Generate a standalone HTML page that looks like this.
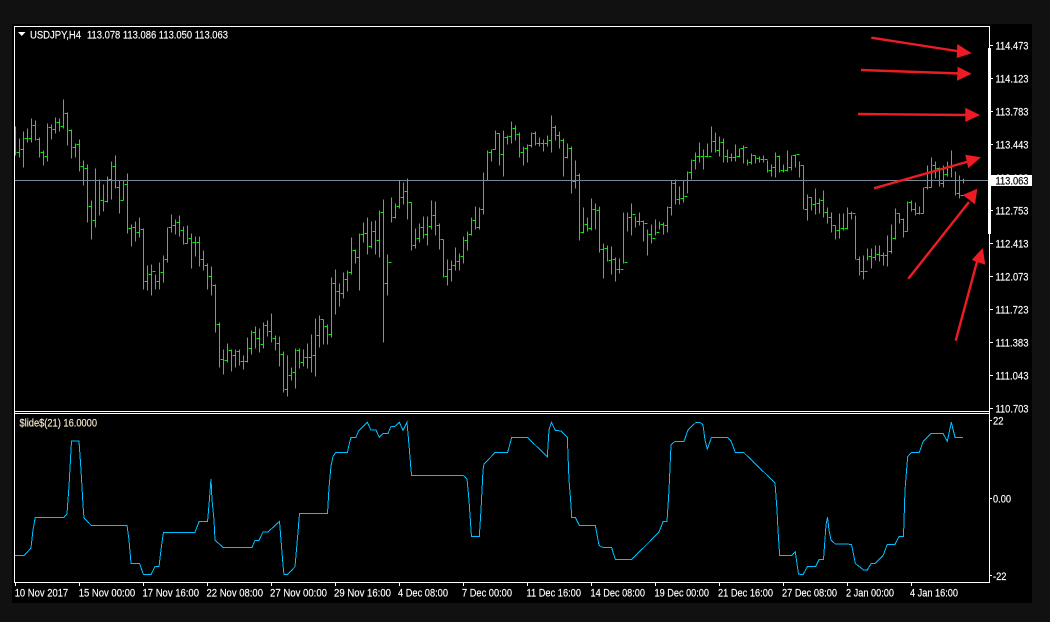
<!DOCTYPE html>
<html><head><meta charset="utf-8"><title>USDJPY,H4</title>
<style>html,body{margin:0;padding:0;background:#111;width:1050px;height:622px;overflow:hidden}svg{display:block}text{font-family:"Liberation Sans",sans-serif;font-size:11px;fill:#fff;stroke:#fff;stroke-width:.15px}</style></head><body>
<svg width="1050" height="622" viewBox="0 0 1050 622" xmlns="http://www.w3.org/2000/svg">
<rect width="1050" height="622" fill="#111"/>
<rect x="12" y="24" width="1020" height="579" fill="#000"/>
<path transform="translate(.5 .5)" shape-rendering="crispEdges" fill="none" stroke="#0ee60e" d="M15 126V155M16 152h2M19 138V157M17 152h2M20 149h2M23 131V167M21 149h2M24 138h2M27 128V142M25 138h2M28 138h2M31 118V142M29 138h2M32 125h2M35 120V140M33 125h2M36 139h2M39 137V157M37 139h2M40 152h2M43 150V165M41 152h2M44 156h2M47 123V161M45 156h2M48 127h2M51 124V139M49 127h2M52 129h2M55 117V133M53 129h2M56 122h2M59 118V131M57 122h2M60 126h2M63 99V128M61 126h2M64 113h2M67 112V145M65 113h2M68 130h2M71 129V158M69 130h2M72 147h2M75 143V157M73 147h2M76 144h2M79 139V171M77 144h2M80 166h2M83 160V185M81 166h2M84 168h2M87 164V222M85 168h2M88 206h2M91 200V239M89 206h2M92 220h2M95 168V227M93 220h2M96 180h2M99 179V215M97 180h2M100 200h2M103 184V211M101 200h2M104 201h2M107 176V202M105 201h2M108 179h2M111 161V199M109 179h2M112 166h2M115 155V188M113 166h2M116 187h2M119 180V213M117 187h2M120 200h2M123 180V200M121 200h2M124 184h2M127 173V233M125 184h2M128 228h2M131 224V246M129 228h2M132 227h2M135 221V241M133 227h2M136 232h2M139 217V237M137 232h2M140 229h2M143 228V289M141 229h2M144 281h2M147 265V290M145 281h2M148 274h2M151 264V295M149 274h2M152 271h2M155 274V289M153 271h2M156 281h2M159 262V289M157 281h2M160 272h2M163 255V282M161 272h2M164 259h2M167 227V262M165 259h2M168 227h2M171 214V232M169 227h2M172 225h2M175 219V234M173 225h2M176 222h2M179 215V236M177 222h2M180 230h2M183 226V244M181 230h2M184 243h2M187 225V243M185 243h2M188 238h2M191 233V268M189 238h2M192 242h2M195 236V256M193 242h2M196 242h2M199 236V266M197 242h2M200 259h2M203 250V270M201 259h2M204 265h2M207 263V289M205 265h2M208 276h2M211 266V295M209 276h2M212 285h2M215 284V332M213 285h2M216 324h2M219 322V367M217 324h2M220 359h2M223 349V374M221 359h2M224 360h2M227 343V362M225 360h2M228 350h2M231 349V371M229 350h2M232 355h2M235 349V367M233 355h2M236 351h2M239 349V365M237 351h2M240 361h2M243 355V369M241 361h2M244 361h2M247 337V362M245 361h2M248 348h2M251 330V354M249 348h2M252 332h2M255 326V348M253 332h2M256 338h2M259 328V352M257 338h2M260 344h2M263 322V348M261 344h2M264 325h2M267 320V336M265 325h2M268 331h2M271 313V342M269 331h2M272 338h2M275 335V350M273 338h2M276 343h2M279 336V366M277 343h2M280 354h2M283 351V392M281 354h2M284 389h2M287 355V396M285 389h2M288 375h2M291 367V380M289 375h2M292 372h2M295 348V388M293 372h2M296 350h2M299 348V368M297 350h2M300 362h2M303 349V366M301 362h2M304 357h2M307 343V368M305 357h2M308 357h2M311 334V372M309 357h2M312 355h2M315 318V376M313 355h2M316 335h2M319 315V347M317 335h2M320 319h2M323 319V344M321 319h2M324 326h2M327 324V344M325 326h2M328 334h2M331 277V337M329 334h2M332 283h2M335 269V314M333 283h2M336 291h2M339 283V306M337 291h2M340 293h2M343 272V298M341 293h2M344 279h2M347 270V291M345 279h2M348 272h2M351 237V274M349 272h2M352 250h2M355 249V263M353 250h2M356 257h2M359 233V290M357 257h2M360 234h2M363 222V242M361 234h2M364 233h2M367 217V254M365 233h2M368 246h2M371 221V248M369 246h2M372 231h2M375 220V254M373 231h2M376 240h2M379 210V257M377 240h2M380 212h2M383 199V342M381 212h2M384 283h2M387 254V295M385 283h2M388 262h2M391 197V222M389 262h2M392 217h2M395 203V218M393 217h2M396 206h2M399 180V208M397 206h2M400 197h2M403 182V204M401 197h2M404 191h2M407 178V219M405 191h2M408 202h2M411 202V250M409 202h2M412 245h2M415 228V248M413 245h2M416 238h2M419 223V242M417 238h2M420 227h2M423 216V238M421 227h2M424 234h2M427 216V245M425 234h2M428 226h2M431 200V229M429 226h2M432 215h2M435 201V235M433 215h2M436 225h2M439 223V249M437 225h2M440 239h2M443 239V277M441 239h2M444 276h2M447 259V285M445 276h2M448 269h2M451 260V281M449 269h2M452 265h2M455 247V270M453 265h2M456 261h2M459 253V270M457 261h2M460 256h2M463 236V263M461 256h2M464 240h2M467 231V250M465 240h2M468 234h2M471 217V235M469 234h2M472 220h2M475 206V229M473 220h2M476 227h2M479 207V229M477 227h2M480 209h2M483 172V214M481 209h2M484 180h2M487 150V180M485 180h2M488 152h2M491 149V161M489 152h2M492 149h2M495 130V149M493 149h2M496 133h2M499 133V165M497 133h2M500 154h2M503 130V176M501 154h2M504 137h2M507 135V144M505 137h2M508 136h2M511 121V143M509 136h2M512 128h2M515 125V140M513 128h2M516 134h2M519 132V157M517 134h2M520 152h2M523 146V165M521 152h2M524 148h2M527 144V162M525 148h2M528 145h2M531 132V147M529 145h2M532 133h2M535 131V145M533 133h2M536 143h2M539 137V146M537 143h2M540 143h2M543 139V151M541 143h2M544 143h2M547 135V146M545 143h2M548 140h2M551 115V152M549 140h2M552 127h2M555 125V140M553 127h2M556 135h2M559 131V148M557 135h2M560 140h2M563 138V176M561 140h2M564 157h2M567 143V158M565 157h2M568 148h2M571 146V193M569 148h2M572 181h2M575 160V188M573 181h2M576 175h2M579 173V240M577 175h2M580 232h2M583 207V233M581 232h2M584 224h2M587 217V231M585 224h2M588 228h2M591 198V230M589 228h2M592 209h2M595 203V229M593 209h2M596 210h2M599 206V252M597 210h2M600 249h2M603 243V278M601 249h2M604 248h2M607 245V261M605 248h2M608 260h2M611 246V274M609 260h2M612 259h2M615 257V281M613 259h2M616 269h2M619 258V273M617 269h2M620 269h2M623 212V263M621 269h2M624 262h2M627 212V231M625 262h2M628 217h2M631 203V235M629 217h2M632 214h2M635 216V227M633 214h2M636 221h2M639 212V225M637 221h2M640 221h2M643 220V241M641 221h2M644 223h2M647 229V255M645 223h2M648 234h2M651 224V243M649 234h2M652 238h2M655 219V235M653 238h2M656 232h2M659 221V229M657 232h2M660 224h2M663 222V234M661 224h2M664 225h2M667 206V232M665 225h2M668 207h2M671 180V215M669 207h2M672 183h2M675 179V204M673 183h2M676 199h2M679 186V204M677 199h2M680 198h2M683 180V202M681 198h2M684 196h2M687 171V193M685 196h2M688 172h2M691 159V179M689 172h2M692 160h2M695 152V169M693 160h2M696 156h2M699 142V162M697 156h2M700 156h2M703 149V169M701 156h2M704 156h2M707 143V157M705 156h2M708 156h2M711 126V152M709 156h2M712 141h2M715 132V152M713 141h2M716 150h2M719 136V156M717 150h2M720 142h2M723 138V162M721 142h2M724 156h2M727 149V162M725 156h2M728 157h2M731 153V161M729 157h2M732 157h2M735 144V161M733 157h2M736 156h2M739 148V157M737 156h2M740 148h2M743 145V163M741 148h2M744 147h2M747 159V165M745 147h2M748 162h2M751 153V164M749 162h2M752 155h2M755 155V163M753 155h2M756 158h2M759 156V162M757 158h2M760 159h2M763 155V162M761 159h2M764 159h2M767 160V172M765 159h2M768 170h2M771 164V176M769 170h2M772 167h2M775 152V177M773 167h2M776 156h2M779 155V172M777 156h2M780 170h2M783 164V172M781 170h2M784 170h2M787 150V171M785 170h2M788 167h2M791 155V170M789 167h2M792 155h2M795 154V167M793 155h2M796 154h2M799 161V177M797 154h2M800 165h2M803 165V209M801 165h2M804 209h2M807 194V220M805 209h2M808 197h2M811 197V210M809 197h2M812 204h2M815 188V214M813 204h2M816 203h2M819 198V213M817 203h2M820 200h2M823 190V217M821 200h2M824 212h2M827 207V223M825 212h2M828 217h2M831 212V232M829 217h2M832 225h2M835 225V239M833 225h2M836 230h2M839 213V238M837 230h2M840 228h2M843 213V230M841 228h2M844 228h2M847 207V229M845 228h2M848 213h2M851 211V219M849 213h2M852 213h2M855 215V259M853 213h2M856 259h2M859 256V275M857 259h2M860 271h2M863 255V279M861 271h2M864 271h2M867 248V260M865 271h2M868 256h2M871 248V268M869 256h2M872 257h2M875 245V260M873 257h2M876 254h2M879 245V261M877 254h2M880 255h2M883 252V265M881 255h2M884 255h2M887 235V266M885 255h2M888 251h2M891 224V253M889 251h2M892 238h2M895 208V239M893 238h2M896 213h2M899 213V223M897 213h2M900 219h2M903 218V237M901 219h2M904 231h2M907 201V231M905 231h2M908 202h2M911 200V211M909 202h2M912 209h2M915 202V215M913 209h2M916 213h2M919 206V214M917 213h2M920 213h2M923 187V213M921 213h2M924 187h2M927 165V189M925 187h2M928 187h2M931 157V187M929 187h2M932 165h2M935 161V178M933 165h2M936 168h2M939 167V186M937 168h2M940 183h2M943 165V187M941 183h2M944 174h2M947 161V176M945 174h2M948 167h2M951 150V177M949 167h2M952 165h2M955 171V195M953 165h2M956 193h2M959 175V198M957 193h2M960 195h2M963 178V183M961 195h2M964 180h2"/>
<rect x="15" y="180" width="976" height="1" fill="#778899"/>
<g fill="#fff" shape-rendering="crispEdges">
<rect x="14" y="26" width="975" height="1"/><rect x="14" y="26" width="1" height="557"/><rect x="989" y="26" width="1" height="557"/>
<rect x="14" y="411" width="975" height="1"/><rect x="14" y="413" width="975" height="1"/><rect x="14" y="582" width="976" height="1"/>
<rect x="988" y="48" width="3" height="186"/>
<path d="M990 45h3v1h-3zM990 78h3v1h-3zM990 111h3v1h-3zM990 144h3v1h-3zM990 210h3v1h-3zM990 243h3v1h-3zM990 276h3v1h-3zM990 309h3v1h-3zM990 342h3v1h-3zM990 375h3v1h-3zM990 408h3v1h-3zM990 420h2v1h-2zM990 498h2v1h-2zM990 575h2v1h-2z"/>
<path d="M15 583h1v3h-1zM79 583h1v3h-1zM143 583h1v3h-1zM207 583h1v3h-1zM271 583h1v3h-1zM335 583h1v3h-1zM399 583h1v3h-1zM463 583h1v3h-1zM527 583h1v3h-1zM591 583h1v3h-1zM655 583h1v3h-1zM719 583h1v3h-1zM783 583h1v3h-1zM847 583h1v3h-1zM911 583h1v3h-1z"/>
</g>
<path d="M18 32h7.5l-3.75 4z" fill="#fff"/>
<g>
<text x="30" y="38.5" textLength="51" lengthAdjust="spacingAndGlyphs">USDJPY,H4</text>
<text x="87" y="38.5" textLength="141" lengthAdjust="spacingAndGlyphs">113.078 113.086 113.050 113.063</text>
<text x="19.5" y="426.5" textLength="77.5" lengthAdjust="spacingAndGlyphs" style="fill:#f5e6c8;stroke:#f5e6c8">$lide$(21) 16.0000</text>
<text x="995.5" y="49.5" textLength="33" lengthAdjust="spacingAndGlyphs">114.473</text>
<text x="995.5" y="82.5" textLength="33" lengthAdjust="spacingAndGlyphs">114.123</text>
<text x="995.5" y="115.5" textLength="33" lengthAdjust="spacingAndGlyphs">113.783</text>
<text x="995.5" y="148.5" textLength="33" lengthAdjust="spacingAndGlyphs">113.443</text>
<text x="995.5" y="182" textLength="33" lengthAdjust="spacingAndGlyphs">113.103</text>
<text x="995.5" y="214.5" textLength="33" lengthAdjust="spacingAndGlyphs">112.753</text>
<text x="995.5" y="247.5" textLength="33" lengthAdjust="spacingAndGlyphs">112.413</text>
<text x="995.5" y="280.5" textLength="33" lengthAdjust="spacingAndGlyphs">112.073</text>
<text x="995.5" y="313.5" textLength="33" lengthAdjust="spacingAndGlyphs">111.723</text>
<text x="995.5" y="346.5" textLength="33" lengthAdjust="spacingAndGlyphs">111.383</text>
<text x="995.5" y="379.5" textLength="33" lengthAdjust="spacingAndGlyphs">111.043</text>
<text x="995.5" y="412.5" textLength="33" lengthAdjust="spacingAndGlyphs">110.703</text>
<rect x="991" y="175" width="41" height="11" fill="#fff"/>
<text x="995.5" y="184.5" textLength="33" lengthAdjust="spacingAndGlyphs" style="fill:#000;stroke:#000">113.063</text>
<text x="993" y="424.5" textLength="10.5" lengthAdjust="spacingAndGlyphs">22</text>
<text x="993" y="502.5" textLength="18" lengthAdjust="spacingAndGlyphs">0.00</text>
<text x="993" y="580" textLength="13.5" lengthAdjust="spacingAndGlyphs">-22</text>
<text x="14.7" y="596.5" textLength="53.5" lengthAdjust="spacingAndGlyphs">10 Nov 2017</text>
<text x="78.7" y="596.5" textLength="56.5" lengthAdjust="spacingAndGlyphs">15 Nov 00:00</text>
<text x="142.5" y="596.5" textLength="56.5" lengthAdjust="spacingAndGlyphs">17 Nov 16:00</text>
<text x="206.5" y="596.5" textLength="56.5" lengthAdjust="spacingAndGlyphs">22 Nov 08:00</text>
<text x="270" y="596.5" textLength="57" lengthAdjust="spacingAndGlyphs">27 Nov 00:00</text>
<text x="334" y="596.5" textLength="57" lengthAdjust="spacingAndGlyphs">29 Nov 16:00</text>
<text x="398" y="596.5" textLength="50" lengthAdjust="spacingAndGlyphs">4 Dec 08:00</text>
<text x="462" y="596.5" textLength="50" lengthAdjust="spacingAndGlyphs">7 Dec 00:00</text>
<text x="526.5" y="596.5" textLength="54.5" lengthAdjust="spacingAndGlyphs">11 Dec 16:00</text>
<text x="590.5" y="596.5" textLength="54.5" lengthAdjust="spacingAndGlyphs">14 Dec 08:00</text>
<text x="654.5" y="596.5" textLength="54.5" lengthAdjust="spacingAndGlyphs">19 Dec 00:00</text>
<text x="718" y="596.5" textLength="55" lengthAdjust="spacingAndGlyphs">21 Dec 16:00</text>
<text x="782" y="596.5" textLength="55" lengthAdjust="spacingAndGlyphs">27 Dec 08:00</text>
<text x="846" y="596.5" textLength="48" lengthAdjust="spacingAndGlyphs">2 Jan 00:00</text>
<text x="910" y="596.5" textLength="48" lengthAdjust="spacingAndGlyphs">4 Jan 16:00</text>
</g>
<polyline fill="none" stroke="#00bfff" stroke-width="1" shape-rendering="crispEdges" points="15,555.7 24,555.7 31,548 33,530 35.3,517.3 64,517.3 67,513.7 69,486 70,468 71.5,441 79,441 81,470 83,505 84,518 91,525.3 127,525.3 129,540 131,563.3 139.5,563.3 143.5,574.7 151,574.7 155,566.5 159,566.5 162,542 163.5,532.3 195,532.3 199,521.7 207.5,521.7 209,505 211,479 212,500 214,520 215,540 216,541 223,547.3 252,547.3 255,540.3 259,540.3 263,532 268,532 279.5,521.3 281,540 283,565 284,574.7 287.5,574.7 295,566.7 298,532 299.5,513.3 327.5,513.3 329,488 331,466 333,456.3 336,452.3 347.5,452.3 349,445 351,437.3 356,437.3 358.5,431 367.3,422.3 371,430 376,430 379.3,437.3 383,433.3 388,433.3 391,426.3 395,426.3 399.3,422.3 403,430.3 407,422.3 409,445 411,470 411.7,475.3 463,475.3 467,479 469,500 471,530 471.5,536.7 479.3,536.7 481,510 483,470 484,464 495.3,452.3 507.7,452.3 511.7,437.3 527.3,437.3 547.3,456.7 549,430 551.5,422.3 555.3,430.3 561,431 567.3,437.3 569,480 571,505 571.7,517.3 575.3,517.3 579.3,525.3 595.3,525.3 599,545 601,546.7 603,547.3 611.5,547.3 615.3,559.3 631.7,559.3 647,544.3 659,532 663,521.7 667,521.7 669,490 671,445 675,441.3 684,441.3 688,430 696,422.3 700,422.3 703,425 705,440 707.3,449 711.5,437.3 727.5,437.3 731,441 735.3,452.3 743.5,452.3 775,483 777,510 778,530 779.7,555.7 791.5,555.7 795.3,551.7 798.5,574 803,574.7 807.3,566.7 815.5,566.7 819,559.7 823.5,559.7 826,525 827.5,517.3 829,530 831,540 835.3,544 851.5,544.3 855.3,563.3 863.5,570 867,570.3 871.5,563.3 875.3,563.3 883,555.7 887.3,544.3 895,544.3 899,536.7 903.5,536.7 905,490 907,465 907.7,456.7 911.5,452.3 919.3,452.3 923.3,441.3 931,433.3 943,433.3 947.3,441.3 951.3,422.3 955,437.3 963,437.3"/>
<g stroke="#ed1c24" stroke-width="2.4" fill="none">
<path d="M871.3 37.7L960 51.5"/><path d="M861 70L960 73.5"/><path d="M858 114L968 115"/><path d="M874 188.3L970 161"/><path d="M908.3 278.7L969 202"/><path d="M955.7 340.7L978 258"/>
</g>
<g fill="#ed1c24">
<path d="M971.7 53.3L957.3 44L956.7 58z"/><path d="M971.7 73.7L957.7 66.7L957 80.7z"/><path d="M980 115L965.3 107.7L965.3 122z"/><path d="M981 157.3L965.3 154.7L968.3 168.3z"/><path d="M977.3 188.7L962.7 195L975 204.3z"/><path d="M982.7 248L971.7 260L985.3 264.7z"/>
</g>
</svg>
</body></html>
